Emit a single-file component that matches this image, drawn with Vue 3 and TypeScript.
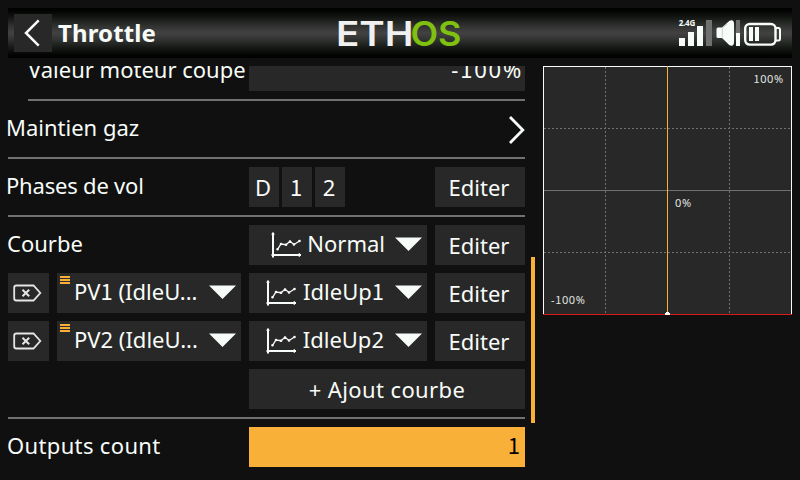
<script setup lang="ts">
import { h, type FunctionalComponent } from 'vue'

interface CurveRow {
  source: string
  curve: string
}

const phases: string[] = ['D', '1', '2']
const curves: CurveRow[] = [
  { source: 'PV1 (IdleU...', curve: 'IdleUp1' },
  { source: 'PV2 (IdleU...', curve: 'IdleUp2' },
]

// The digit 1 takes its footed form from a second family.
const Label: FunctionalComponent<{ text: string }> = (props) =>
  h(
    'span',
    { class: 'label' },
    props.text.split(/(1)/).filter(Boolean).map((part) => (part === '1' ? h('span', { class: 'one' }, part) : part)),
  )
Label.props = ['text']

const CurveIcon: FunctionalComponent = () =>
  h('svg', { class: 'curve-icon', width: 31, height: 26, viewBox: '0 0 31 26', fill: 'none', stroke: '#f8fcf8' }, [
    h('path', { d: 'M2 .5V25.5M0.5 23H30', 'stroke-width': 2 }),
    h('path', { d: 'M0.6 2.2H3.4M28.3 21.2V24.8', 'stroke-width': 1.4 }),
    h('path', { d: 'M6.5 17.3L10 12L15 12.7L19 9.3L23 12.5L28.5 9', 'stroke-width': 1.3 }),
    h('path', {
      d: 'M6.5 17.3h.01M10 12h.01M15 12.7h.01M19 9.5h.01M23 12.5h.01M28.5 9h.01',
      'stroke-width': 2.6,
      'stroke-linecap': 'round',
    }),
  ])

const Arrow: FunctionalComponent = () =>
  h('svg', { class: 'arrow', width: 27, height: 14, viewBox: '0 0 27 14', fill: '#f8fcf8' }, [
    h('path', { d: 'M0 .5H27L13.5 14Z' }),
  ])
</script>

<template>
  <div class="screen">
    <header class="topbar">
      <button class="back">
        <svg width="38" height="38" viewBox="0 0 38 38" fill="none" stroke="#f8fcf8" stroke-width="2.5">
          <path d="M24.7 6.3L12 19L24.7 31.7" />
        </svg>
      </button>
      <h1 class="title">Throttle</h1>
      <svg class="logo" width="130" height="50" viewBox="0 0 130 50">
        <text class="logo-text" x="1" y="38" textLength="77.500" lengthAdjust="spacingAndGlyphs" fill="#f0f0f0">ETH</text>
        <text class="logo-text" x="75.500" y="38" textLength="51" lengthAdjust="spacingAndGlyphs" fill="#80c010">OS</text>
      </svg>
      <svg class="status" width="104" height="30" viewBox="678 18 104 30">
        <text class="band" x="678.7" y="26.3" textLength="16.5" fill="#f8fcf8">2.4G</text>
        <g fill="#f8fcf8" shape-rendering="crispEdges">
          <rect x="679" y="38" width="6" height="8" />
          <rect x="688" y="32" width="6" height="14" />
          <rect x="697" y="26" width="6" height="20" />
          <rect x="706" y="20" width="6" height="26" fill="#707070" />
          <rect x="736" y="20" width="4" height="13" fill="#707070" />
          <rect x="736" y="33" width="4" height="13" />
          <rect x="749" y="27" width="4" height="14" />
          <rect x="755" y="27" width="4" height="14" />
        </g>
        <path d="M718 27.5H722L729.5 20.8Q734 19 734 24V42Q734 47 729.5 45.2L722 38H718Q716.5 38 716.5 36.5V29Q716.5 27.5 718 27.5Z" fill="#f8fcf8" />
        <path d="M722.3 37.5V28.3L727 24" fill="none" stroke="#b8bab8" stroke-width=".7" />
        <rect x="745.2" y="24" width="30.3" height="20.6" rx="4.5" fill="none" stroke="#f8fcf8" stroke-width="2.4" />
        <path d="M776 28H778.5Q780 28 780 30V38.500Q780 40.500 778.500 40.500H776" fill="none" stroke="#f8fcf8" stroke-width="2" />
      </svg>
    </header>

    <main class="body">
      <section class="form">
        <div class="rows">
          <div class="row indented">
            <Label class="name" text="Valeur moteur coupe" />
            <div class="field number percent"><Label text="-100%" /></div>
          </div>
          <hr class="rule short" />
          <div class="row">
            <Label class="name wide" text="Maintien gaz" />
            <svg class="chevron" width="17" height="30" viewBox="0 0 17 30" fill="none" stroke="#f8fcf8" stroke-width="2.8">
              <path d="M2 3L14.8 16L2 29" />
            </svg>
          </div>
          <hr class="rule" />
          <div class="row">
            <Label class="name phases-name" text="Phases de vol" />
            <div class="phases">
              <div v-for="phase in phases" :key="phase" class="field phase"><Label :text="phase" /></div>
            </div>
            <button class="field edit"><Label text="Editer" /></button>
          </div>
          <hr class="rule" />
          <div class="row">
            <Label class="name courbe" text="Courbe" />
            <div class="field select"><CurveIcon /><Label text="Normal" /><Arrow /></div>
            <button class="field edit"><Label text="Editer" /></button>
          </div>
          <div v-for="row in curves" :key="row.curve" class="row curve-row">
            <button class="field remove">
              <svg width="29" height="18" viewBox="0 0 29 18" fill="none" stroke="#e4e6e4" stroke-width="1.8">
                <path d="M3.500 1.500H20.500L27.300 9L20.500 16.500H3.500Q1.200 16.500 1.200 14.200V3.800Q1.200 1.500 3.500 1.500Z" />
                <path d="M9.500 5.700L16.200 12.300M16.200 5.700L9.500 12.300" stroke-width="2" />
              </svg>
            </button>
            <div class="field source">
              <span class="menu"><i></i><i></i><i></i></span>
              <Label :text="row.source" /><Arrow />
            </div>
            <div class="field select curve"><CurveIcon /><Label :text="row.curve" /><Arrow /></div>
            <button class="field edit"><Label text="Editer" /></button>
          </div>
          <div class="row add-row">
            <button class="field add"><Label text="+ Ajout courbe" /></button>
          </div>
          <hr class="rule" />
          <div class="row">
            <Label class="name outputs" text="Outputs count" />
            <div class="field number active"><Label text="1" /></div>
          </div>
        </div>
      </section>
      <div class="scroll"><div class="thumb"></div></div>
      <svg class="graph" width="249" height="249" viewBox="0 0 249 249">
        <rect width="249" height="249" fill="#282828" />
        <g shape-rendering="crispEdges" fill="none" stroke-width="1">
          <path d="M62.5 1V248M186.500 1V248M1 62.500H248M1 186.500H248" stroke="#707070" stroke-dasharray="2 2" />
          <path d="M1 124.500H248" stroke="#707070" />
          <path d="M.5 249V.5H248.500V249" stroke="#f8fcf8" />
          <path d="M124.500 0V248" stroke="#f8b038" />
          <path d="M0 248.500H249" stroke="#e01818" />
        </g>
        <path d="M122 249V247H123V246H126V247H127V249Z" fill="#ffffff" shape-rendering="crispEdges" />
        <g class="scale">
          <text x="210.500" y="17"><tspan class="one">1</tspan>00%</text>
          <text x="132" y="141">0%</text>
          <text x="8" y="238">-<tspan class="one">1</tspan>00%</text>
        </g>
      </svg>
    </main>
  </div>
</template>

<style>
body {
  margin: 0;
  background: #101010;
}
</style>

<style scoped>
.screen {
  box-sizing: border-box;
  width: 800px;
  height: 480px;
  padding: 8px 8px 0;
  display: flex;
  flex-direction: column;
  gap: 8px;
  overflow: hidden;
  background: #101010;
  color: #f8fcf8;
  font-family: 'Noto Sans', 'Open Sans', sans-serif;
  font-size: 22px;
}

button {
  border: 0;
  padding: 0;
  color: inherit;
  font: inherit;
}

.topbar {
  box-sizing: border-box;
  flex: none;
  height: 50px;
  padding: 0 10px 0 6px;
  display: flex;
  align-items: center;
  background: linear-gradient(#000 0%, #020402 6%, #181b18 22%, #303230 36%, #424242 50%, #303230 64%, #181b18 78%, #020402 94%, #000 100%);
}

.back {
  width: 38px;
  height: 38px;
  background: #282828;
}

.back svg {
  display: block;
}

.title {
  width: 277px;
  margin: 0 0 0 6px;
  font-size: 24px;
  font-weight: 700;
  line-height: 34px;
  letter-spacing: 0.12px;
}

.logo {
  overflow: visible;
}

.logo-text {
  font-family: Inter, sans-serif;
  font-size: 34px;
  font-weight: 600;
}

.status {
  margin-left: auto;
}

.band {
  font-size: 8px;
  font-weight: 700;
}

.body {
  flex: 1;
  min-height: 0;
  display: flex;
}

.form {
  width: 517px;
  margin-left: -8px;
  padding-left: 8px;
  overflow: hidden;
}

.rows {
  margin-top: -15px;
}

.row {
  height: 40px;
  display: flex;
}

.row.indented {
  padding-left: 20px;
}

.rule {
  height: 2px;
  margin: 8px 0;
  border: 0;
  background: #707070;
}

.rule.short {
  margin-left: 20px;
}

.label {
  display: block;
  white-space: pre;
  line-height: 36px;
}

:deep(.one) {
  font-family: 'Noto Sans CJK SC', sans-serif;
  line-height: 0;
}

.name {
  width: 243px;
  margin-left: -2px;
}

.indented .name {
  width: 221px;
  margin-left: 0;
}

.name.wide {
  flex: 1;
}

.phases-name {
  letter-spacing: -0.2px;
}

.courbe,
.outputs {
  width: 242px;
  margin-left: -1px;
}

.outputs {
  letter-spacing: 0.35px;
}

.field {
  box-sizing: border-box;
  height: 40px;
  display: flex;
  background: #282828;
}

.number {
  flex: 1;
  justify-content: flex-end;
  padding-right: 5px;
}

.percent {
  padding-right: 2px;
  letter-spacing: 1.8px;
}

.active {
  background: #f8b038;
  color: #000;
}

.chevron {
  margin-top: 5px;
}

.phases {
  flex: 1;
  display: flex;
  gap: 3px;
}

.phase {
  width: 30px;
  padding-right: 2px;
  justify-content: center;
}

.phase .label,
.edit .label,
.add .label {
  line-height: 40px;
}

.edit {
  width: 90px;
  margin-left: 8px;
  padding-right: 2px;
  justify-content: center;
}

.select {
  width: 178px;
  justify-content: flex-end;
  padding-right: 5px;
}

.curve-icon {
  margin: 7px 5px 0 0;
}

.arrow {
  margin: 12px 0 0 10px;
}

.curve .arrow {
  margin-left: 11px;
}

.curve .curve-icon {
  margin-right: 6px;
}

.curve-row,
.add-row {
  margin-top: 8px;
}

.remove {
  width: 41px;
  margin-right: 8px;
  padding-right: 2px;
  align-items: center;
  justify-content: center;
}

.source {
  width: 184px;
  margin-right: 8px;
  padding: 0 5px 0 3px;
}

.source .arrow {
  margin-left: auto;
}

.menu {
  width: 10px;
  margin: 3px 4px 0 0;
  display: flex;
  flex-direction: column;
  gap: 1px;
}

.menu i {
  height: 2px;
  background: #f8b038;
}

.add-row {
  justify-content: flex-end;
}

.add {
  width: 276px;
  justify-content: center;
  letter-spacing: 0.4px;
}

.scroll {
  width: 4px;
  margin: 0 8px 0 6px;
  padding-top: 191px;
}

.thumb {
  height: 166px;
  background: #f8b038;
}

.graph {
  display: block;
}

.scale {
  fill: #e0e4e0;
  font-size: 11px;
  letter-spacing: 0.6px;
}
</style>
